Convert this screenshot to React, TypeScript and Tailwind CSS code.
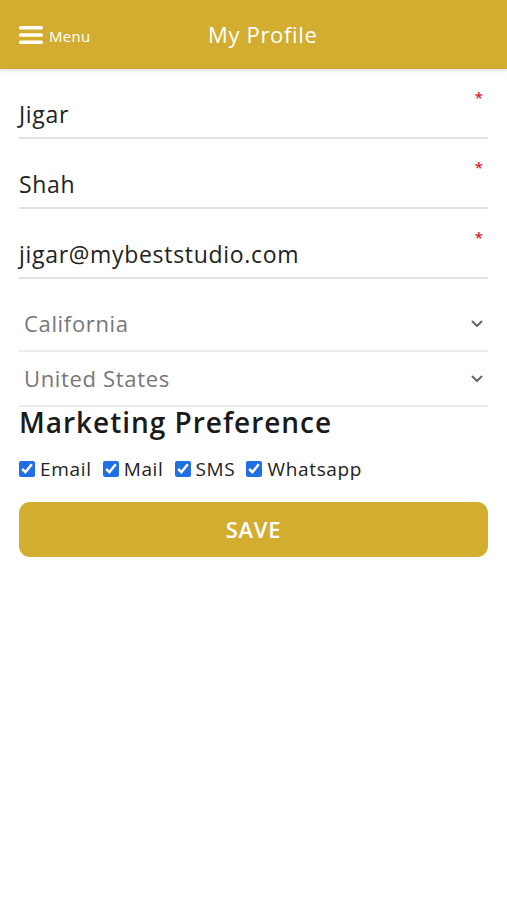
import React, { useState } from 'react';

const font = { fontFamily: '"Open Sans", "Liberation Sans", sans-serif' };

const TextRow = ({ value }: { value: string }) => (
  <div className="relative flex h-[70px] items-end border-b-2 border-[#e2e2e2] pb-[11px]">
    <span className="text-[23px] leading-none tracking-[0.03em] text-[#222]">{value}</span>
    <span className="absolute right-[5px] top-[21px] text-[15px] font-semibold leading-none text-[#e02020]">*</span>
  </div>
);

const SelectRow = ({ value }: { value: string }) => (
  <div className="flex h-[55px] items-center justify-between border-b-2 border-[#ececec] pl-[5px] pr-[5px]">
    <span className="text-[22px] tracking-[0.03em] text-[#777]">{value}</span>
    <svg width="12" height="8" viewBox="0 0 12 8" fill="none">
      <path d="M1.5 1.5 L6 6 L10.5 1.5" stroke="#666" strokeWidth="2" strokeLinecap="round" strokeLinejoin="round" />
    </svg>
  </div>
);

export default function App() {
  const [prefs, setPrefs] = useState({ Email: true, Mail: true, SMS: true, Whatsapp: true });

  return (
    <div className="min-h-[900px] w-full bg-white" style={font}>
      <header className="relative flex h-[69px] items-center bg-[#d3ad2f] px-[19px] shadow-[0_2px_3px_rgba(0,0,0,0.12)]">
        <div className="flex items-center gap-[6px] text-white">
          <svg width="24" height="18" viewBox="0 0 24 18">
            <rect x="0" y="0" width="24" height="3.6" rx="1.6" fill="white" />
            <rect x="0" y="7.2" width="24" height="3.6" rx="1.6" fill="white" />
            <rect x="0" y="14.4" width="24" height="3.6" rx="1.6" fill="white" />
          </svg>
          <span className="mt-[3px] text-[15px] font-medium tracking-[0.02em]">Menu</span>
        </div>
        <h1 className="absolute left-[208px] text-[22px] font-medium tracking-[0.03em] text-white">My Profile</h1>
      </header>

      <div className="px-[19px]">
        <TextRow value="Jigar" />
        <TextRow value="Shah" />
        <TextRow value="jigar@mybeststudio.com" />
        <div className="h-[18px]" />
        <SelectRow value="California" />
        <SelectRow value="United States" />

        <h2 className="mt-[-1px] text-[28px] font-semibold leading-[32px] tracking-[0.035em] text-[#1a1a1a]">Marketing Preference</h2>

        <div className="mt-[17px] flex items-center gap-[11px]">
          {(Object.keys(prefs) as (keyof typeof prefs)[]).map((k) => (
            <label key={k} className="flex items-center gap-[5px] text-[19px] tracking-[0.035em] text-[#222]">
              <input
                type="checkbox"
                checked={prefs[k]}
                onChange={() => setPrefs({ ...prefs, [k]: !prefs[k] })}
                className="h-[16px] w-[16px] accent-[#1f6fe5]"
              />
              {k}
            </label>
          ))}
        </div>

        <button className="mt-[18px] flex h-[55px] w-full items-center justify-center rounded-[11px] bg-[#d3ad2f] text-[22px] font-semibold tracking-[0.03em] text-white">
          SAVE
        </button>
      </div>
    </div>
  );
}
